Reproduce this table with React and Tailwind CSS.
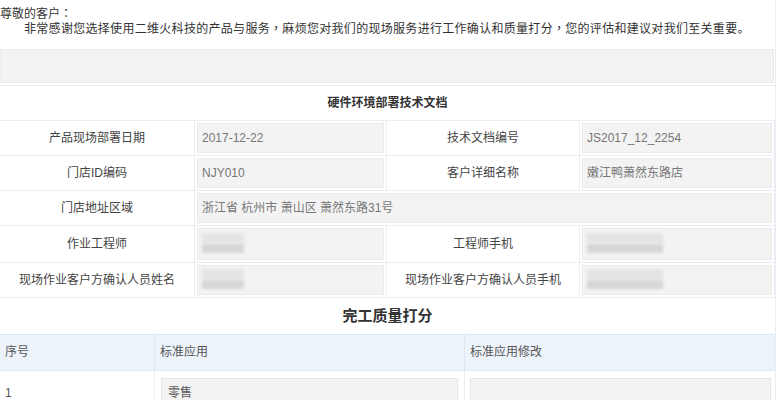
import React from 'react';

const font = { fontFamily: '"Liberation Sans", "Noto Sans CJK SC", sans-serif' };
const tc = { fontFamily: '"Noto Sans CJK TC", sans-serif' };

function Punct({ children }) {
  return <span className="leading-[0]" style={tc}>{children}</span>;
}

function Blur({ w = 'w-[42px]' }) {
  return (
    <div className="relative h-[22px]">
      <div className={`absolute left-0 top-0 h-[10px] ${w} bg-[#e4e4e4] blur-[1.5px]`} />
      <div className={`absolute left-0 top-[11px] h-[9px] ${w} bg-[#d6d6d6] blur-[1.5px]`} />
    </div>
  );
}

function Label({ children }) {
  return (
    <div className="flex items-center justify-center border-b border-r border-[#e9eef5] bg-white text-[12px] text-[#444]">
      {children}
    </div>
  );
}

function Value({ children, span }) {
  return (
    <div className={`border-b border-r border-[#e9eef5] bg-white p-[2px] ${span ? 'col-span-3' : ''}`}>
      <div className="flex h-full items-center border border-[#ebebeb] bg-[#f3f3f3] px-[4px] text-[12px] text-[#777]">
        {children}
      </div>
    </div>
  );
}

export default function App() {
  return (
    <main className="h-[400px] w-[782px] overflow-hidden bg-white" style={font}>
      <div className="w-[776px] border-r border-[#e9eef5]">
        <div className="pt-[7px] text-[12px] leading-[15px] text-[#333]">
          <p>尊敬的客户<Punct>：</Punct></p>
          <p className="pl-[24px] tracking-[0.3px]">
            非常感谢您选择使用二维火科技的产品与服务<Punct>，</Punct>麻烦您对我们的现场服务进行工作确认和质量打分<Punct>，</Punct>您的评估和建议对我们至关重要。
          </p>
        </div>

        <div className="mt-[12px] h-[34px] w-[774px] border border-[#ececec] bg-[#f3f3f3]" />

        <div className="mt-[2px] flex h-[36px] items-center justify-center border-y border-[#e9eef5] text-[12px] font-bold text-[#333]">
          硬件环境部署技术文档
        </div>

        <div className="grid grid-cols-[195px_192px_193px_1fr] grid-rows-[35px_35px_35px_37px_35px]">
          <Label>产品现场部署日期</Label>
          <Value>2017-12-22</Value>
          <Label>技术文档编号</Label>
          <Value>JS2017_12_2254</Value>

          <Label>门店ID编码</Label>
          <Value>NJY010</Value>
          <Label>客户详细名称</Label>
          <Value>嫩江鸭萧然东路店</Value>

          <Label>门店地址区域</Label>
          <Value span>浙江省 杭州市 萧山区 萧然东路31号</Value>

          <Label>作业工程师</Label>
          <Value><Blur /></Value>
          <Label>工程师手机</Label>
          <Value><Blur w="w-[76px]" /></Value>

          <Label>现场作业客户方确认人员姓名</Label>
          <Value><Blur /></Value>
          <Label>现场作业客户方确认人员手机</Label>
          <Value><Blur w="w-[76px]" /></Value>
        </div>

        <div className="flex h-[36px] items-center justify-center text-[15px] font-bold text-[#333]">
          完工质量打分
        </div>

        <div className="grid grid-cols-[155px_310px_1fr] text-[12px] leading-[15px] text-[#555]">
          <div className="flex h-[37px] items-center border-y border-r border-[#dfe8f2] bg-[#edf3fb] pl-[5px]">序号</div>
          <div className="flex h-[37px] items-center border-y border-r border-[#dfe8f2] bg-[#edf3fb] pl-[5px]">标准应用</div>
          <div className="flex h-[37px] items-center border-y border-[#dfe8f2] bg-[#edf3fb] pl-[5px]">标准应用修改</div>

          <div className="h-[40px] border-r border-[#e9eef5] pl-[5px] pt-[15px]">1</div>
          <div className="border-r border-[#e9eef5] pl-[6px] pr-[6px] pt-[7px]">
            <div className="h-[34px] border border-[#e6e6e6] bg-[#f3f3f3] pl-[6px] pt-[7px]">零售</div>
          </div>
          <div className="pl-[5px] pr-[4px] pt-[7px]">
            <div className="h-[34px] border border-[#e6e6e6] bg-[#f3f3f3]" />
          </div>
        </div>
      </div>
    </main>
  );
}
